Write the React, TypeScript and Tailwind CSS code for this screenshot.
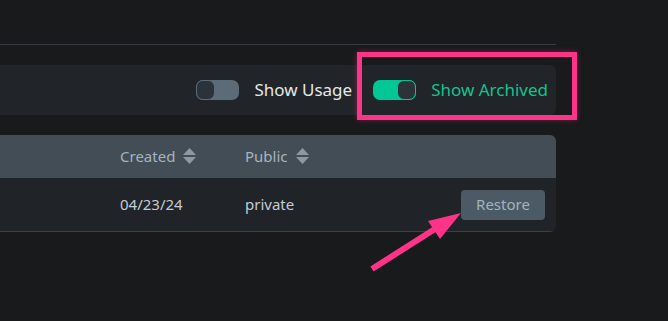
import React from "react"

function Toggle({ on }: { on: boolean }) {
  return (
    <div
      className={
        on
          ? "flex h-5 w-[43px] justify-end rounded-[7px] bg-[#00c793]"
          : "flex h-5 w-[43px] justify-start rounded-[7px] bg-[#5b6b77]"
      }
    >
      <div
        className={
          on
            ? "h-5 w-[19px] rounded-[7px] border border-[#00c793] bg-[#2b323a]"
            : "h-5 w-[19px] rounded-[7px] border border-[#5b6b77] bg-[#2b323a]"
        }
      />
    </div>
  )
}

function SortIcon() {
  return (
    <svg width="13" height="17" viewBox="0 0 13 17" className="ml-2">
      <path d="M6.5 0 L13 7 L0 7 Z" fill="#8c99a3" />
      <path d="M0 9 L13 9 L6.5 16 Z" fill="#8c99a3" />
    </svg>
  )
}

export default function App() {
  return (
    <div
      className="relative min-h-screen overflow-hidden bg-[#181a1c]"
      style={{ fontFamily: '"Noto Sans", sans-serif' }}
    >
      <div className="w-[556px] pt-[44px]">
        <div className="h-px bg-[#363b40]" />

        <div className="mt-5 flex h-[50px] items-center justify-end rounded-r-md bg-[#212428] pr-2">
          <Toggle on={false} />
          <span className="ml-[15px] text-[17px] text-[#e4e8eb]">Show Usage</span>
          <div className="ml-[21px]">
            <Toggle on />
          </div>
          <span className="ml-[15px] text-[17px] text-[#14c38e]">Show Archived</span>
        </div>

        <div className="mt-5 overflow-hidden rounded-r-md">
          <div className="flex h-[43px] items-center bg-[#424d56] text-[15px] text-[#a5b4bf]">
            <div className="w-[120px]" />
            <div className="flex w-[125px] items-center">
              Created
              <SortIcon />
            </div>
            <div className="flex items-center">
              Public
              <SortIcon />
            </div>
          </div>
          <div className="flex h-[54px] items-center border-b border-[#3a4047] bg-[#202328] text-[15px] text-[#c3ccd3]">
            <div className="w-[120px]" />
            <div className="w-[125px]">04/23/24</div>
            <div>private</div>
            <button className="ml-auto mr-[11px] h-[30px] w-[84px] rounded-[4px] bg-[#4b5a64] text-[15px] text-[#a3b3bd]">
              Restore
            </button>
          </div>
        </div>
      </div>

      <div className="absolute left-[357px] top-[52px] h-[68px] w-[220px] border-[5px] border-[#ff3388] shadow-[0_0_6px_rgba(255,51,136,0.35)]" />

      <svg className="absolute left-0 top-0" width="668" height="321">
        <line x1="372" y1="269" x2="438" y2="227" stroke="#ff3388" strokeWidth="6" />
        <path d="M461 213 L428 221 L440 239 Z" fill="#ff3388" />
      </svg>
    </div>
  )
}
